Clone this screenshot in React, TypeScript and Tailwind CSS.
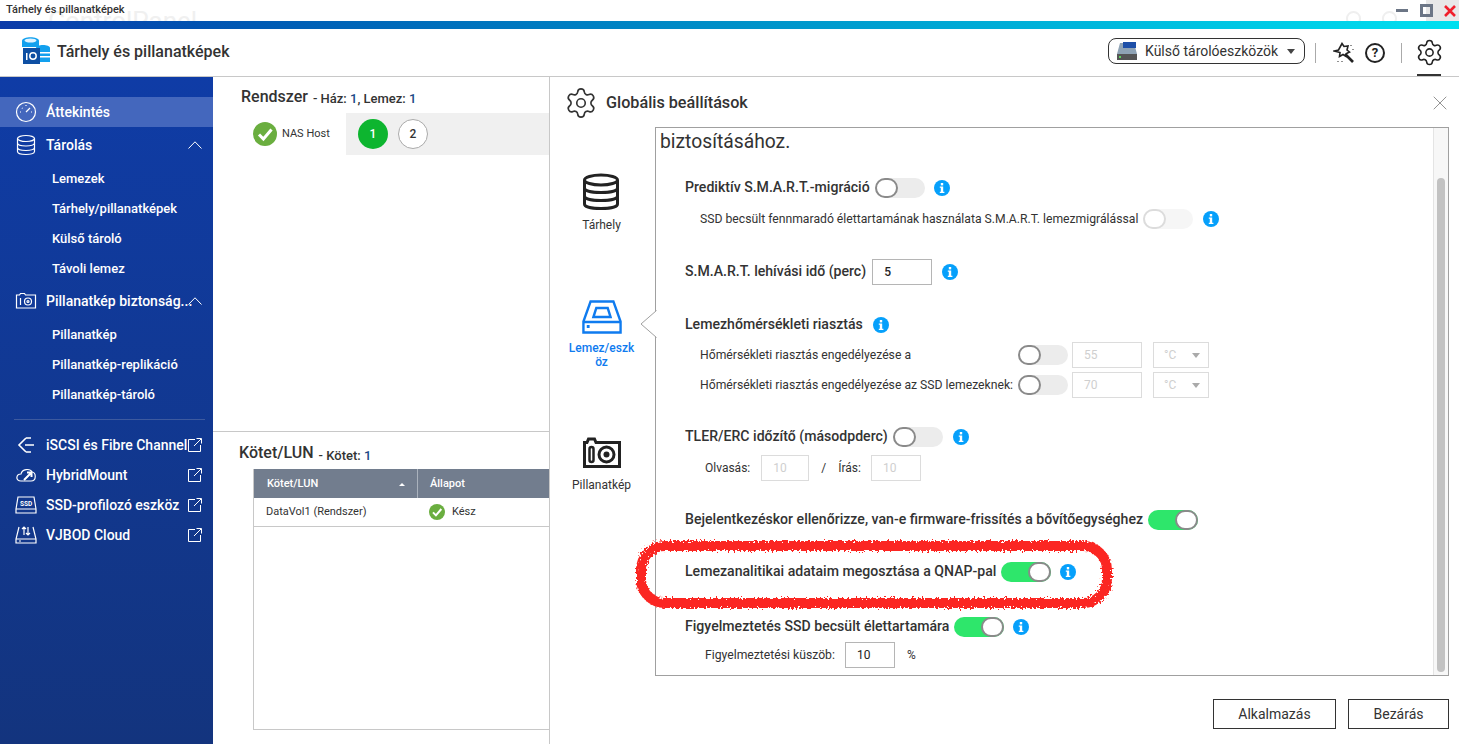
import { Settings, X } from 'lucide-react'
import type { ReactNode } from 'react'

function InfoDot() {
  return (
    <svg width="16" height="16" viewBox="0 0 16 16" className="shrink-0">
      <circle cx="8" cy="8" r="8" fill="#06a0fb" />
      <rect x="6.8" y="3" width="2.4" height="2.4" fill="#fff" />
      <path d="M5.8 6.6h3.4v5.2h1.2v1.2H5.8v-1.2h1V7.8h-1z" fill="#fff" />
    </svg>
  )
}

function Toggle({ on, faded }: { on?: boolean; faded?: boolean }) {
  return (
    <div className={`flex h-5 w-[50px] shrink-0 rounded-full ${on ? 'justify-end bg-[#2ee66b]' : faded ? 'bg-[#f6f6f6]' : 'bg-[#ececec]'}`}>
      <div className={`h-5 w-[23px] rounded-full border-[2px] bg-white ${faded ? 'border-[#dcdcdc]' : 'border-[#8a8a8a]'}`} />
    </div>
  )
}

function CheckDot({ size }: { size: number }) {
  return (
    <svg width={size} height={size} viewBox="0 0 24 24" className="shrink-0">
      <circle cx="12" cy="12" r="12" fill="#6aae3f" />
      <path d="M6 12.5l4.4 4.5L18.5 7.5" fill="none" stroke="#fff" strokeWidth="3" />
    </svg>
  )
}

function TextBox({ value, w, off }: { value: string; w: string; off?: boolean }) {
  return (
    <div className={`flex h-[26px] items-center border pl-[11px] text-xs ${w} ${off ? 'border-[#dcdcdc] text-[#cfcfcf]' : 'border-[#b5b5b5] text-[#222]'}`}>
      {value}
    </div>
  )
}

function UnitSelect() {
  return (
    <div className="flex h-[26px] w-[56px] items-center justify-between border border-[#dcdcdc] pr-2 pl-[10px] text-xs text-[#cfcfcf]">
      °C
      <span className="h-0 w-0 border-x-[4px] border-t-[5px] border-x-transparent border-t-[#aaa]" />
    </div>
  )
}

function OpenIcon() {
  return (
    <svg width="14" height="14" viewBox="0 0 14 14" fill="none" stroke="#fff" strokeWidth="1" className="shrink-0">
      <path d="M7 1.5H.5v12h12V7M6 8l7-7M8.5.5H13.5V5.5" />
    </svg>
  )
}

function NavIcon({ children }: { children: ReactNode }) {
  return (
    <svg width="22" height="22" viewBox="0 0 22 22" fill="none" stroke="#fff" strokeWidth="1.2" className="shrink-0">
      {children}
    </svg>
  )
}

function NavRow({ icon, label, right, active }: { icon: ReactNode; label: string; right?: ReactNode; active?: boolean }) {
  return (
    <div className={`flex h-[30px] items-center pr-[11px] pl-[15px] ${active ? 'bg-[#4467bd]' : ''}`}>
      {icon}
      <span className="ml-[9px] w-0 flex-1 text-sm font-medium whitespace-nowrap text-white">{label}</span>
      {right}
    </div>
  )
}

function SubRow({ label }: { label: string }) {
  return <div className="flex h-[30px] items-center pt-[2px] pl-[52px] text-[13px] font-medium text-white">{label}</div>
}

const chevron = (
  <svg width="14" height="8" viewBox="0 0 14 8" fill="none" stroke="#fff" strokeWidth="1" className="shrink-0">
    <path d="M.5 7.500L7 .8l6.500 6.700" />
  </svg>
)

export default function App() {
  return (
    <div className="relative flex h-[744px] w-[1459px] flex-col overflow-hidden bg-white font-['Roboto',sans-serif] text-[#333]">
      <div className="relative flex h-[21px] items-center justify-between overflow-hidden pl-[6px] text-[11px] font-medium text-[#333]">
        {/* ghost of the window behind */}
        <span className="absolute top-[6px] left-[48px] text-[26px] leading-[30px] font-normal whitespace-nowrap text-[#f0f0f0]">ControlPanel</span>
        <div className="absolute top-[11px] left-[1346px] size-[15px] rounded-full border-2 border-[#efefef]" />
        <div className="absolute top-[11px] left-[1382px] size-[15px] rounded-full border-2 border-[#efefef]" />
        <span className="relative">Tárhely és pillanatképek</span>
        <div className="relative flex h-full items-center">
          <div className="mr-[12px] h-[3px] w-3 bg-[#6c7686]" />
          <div className="relative z-10 -mr-[7px] size-[13px] border-[3px] border-[#6c7686]" />
          <div className="flex h-full w-[33px] items-center justify-end bg-[#e8e8e8] pr-[3px]">
            <svg width="12" height="12" viewBox="0 0 12 12" fill="none" stroke="#f0202c" strokeWidth="2.600">
              <path d="M1 1l10 10M11 1L1 11" />
            </svg>
          </div>
        </div>
      </div>
      <div className="h-2 bg-gradient-to-r from-[#0c3aa8] via-[#0090c8] to-[#00e0f0]" />
      <header className="flex h-[48px] items-center border-b border-[#c8c8c8] pl-[22px]">
        <svg width="28" height="28" viewBox="0 0 28 28" className="mb-[6px] shrink-0">
          <path d="M0 5c0-5 17-5 17 0v6H0z" fill="#12a0ee" />
          <ellipse cx="8.5" cy="4.500" rx="6" ry="2" fill="#dff3ff" />
          <path d="M14 12c0-4 14-4 14 0v14H14z" fill="#12a0ee" />
          <path d="M18 16h10v1.400H18zM18 20h10v1.400H18z" fill="#fff" />
          <rect x="1" y="12" width="17" height="16" fill="#0e4fa3" />
          <circle cx="11" cy="20" r="3.200" fill="none" stroke="#fff" strokeWidth="1.500" />
          <rect x="4" y="17" width="1.500" height="7" fill="#fff" />
        </svg>
        <span className="mb-[2px] ml-[7px] text-base font-medium text-[#333]">Tárhely és pillanatképek</span>
        <div className="ml-auto flex items-center">
          <div className="mb-[3px] flex h-[26px] w-[197px] items-center rounded-lg border border-[#333] pl-2 text-sm text-[#333]">
            <svg width="20" height="18" viewBox="0 0 20 18" className="shrink-0">
              <path d="M3 1h14l3 11H0z" fill="#8fa3b5" />
              <rect x="0" y="12" width="20" height="6" fill="#555" />
              <rect x="6" y="0" width="13" height="6" fill="#1d4fa8" />
              <rect x="2" y="14" width="2" height="2" fill="#5fd35f" />
            </svg>
            <span className="ml-2">Külső tárolóeszközök</span>
            <span className="ml-[9px] h-0 w-0 border-x-[4px] border-t-[5px] border-x-transparent border-t-[#444]" />
          </div>
          <div className="mr-[17px] ml-[10px] h-5 w-px bg-[#aaa]" />
          <svg width="22" height="22" viewBox="0 0 22 22" fill="none" stroke="#222" strokeWidth="1.600" className="shrink-0">
            <path d="M9 1.500l2 3 4-.5-1 4 2.500 2-3 1.500-.5 3-3-2-3.500 2 .5-4L1.500 9l4-1z" />
            <path d="M12 12l8 8" strokeWidth="2.600" />
            <path d="M18 3v1M20 7v1M5 19v1M9 19v1" strokeWidth="1" />
          </svg>
          <div className="ml-[10px] flex size-[20px] items-center justify-center rounded-full border-2 border-[#222] text-[13px] leading-none font-bold text-[#222]">?</div>
          <div className="mr-[15px] ml-[16px] h-5 w-px bg-[#aaa]" />
          <div className="relative mr-[18px] flex h-[47px] w-6 items-center justify-center">
            <Settings size={29} strokeWidth={1.300} color="#222" className="shrink-0" />
            <div className="absolute inset-x-0 bottom-0 h-[2px] bg-[#333]" />
          </div>
        </div>
      </header>
      <div className="flex min-h-0 flex-1">
        <aside className="flex w-[213px] shrink-0 flex-col bg-gradient-to-b from-[#0f3ca6] to-[#13347e] pt-5">
          <NavRow
            active
            label="Áttekintés"
            icon={<NavIcon><circle cx="11" cy="11" r="9.500" /><path d="M11 11l4-4M5 11h1M11 4v1M16 11h1M7 7l.5.5" /></NavIcon>}
          />
          <div className="mt-[3px]">
            <NavRow
              label="Tárolás"
              right={chevron}
              icon={<NavIcon><ellipse cx="11" cy="4.500" rx="8.500" ry="3" /><path d="M2.500 4.500v13c0 4 17 4 17 0v-13M2.500 9c0 4 17 4 17 0M2.500 13.500c0 4 17 4 17 0" /></NavIcon>}
            />
          </div>
          <div className="mt-[3px]">
            <SubRow label="Lemezek" />
            <SubRow label="Tárhely/pillanatképek" />
            <SubRow label="Külső tároló" />
            <SubRow label="Távoli lemez" />
          </div>
          <div className="mt-[3px]">
            <NavRow
              label="Pillanatkép biztonság..."
              right={chevron}
              icon={<NavIcon><path d="M1.500 5h3l1-1.500h4L10.500 5h10v13h-19z" /><path d="M5.500 8v7" /><circle cx="13" cy="11.500" r="3.500" /><circle cx="13" cy="11.500" r="1" /></NavIcon>}
            />
          </div>
          <div className="mt-[3px]">
            <SubRow label="Pillanatkép" />
            <SubRow label="Pillanatkép-replikáció" />
            <SubRow label="Pillanatkép-tároló" />
          </div>
          <div className="mt-[10px] mr-2 mb-[10px] ml-[14px] h-px bg-[#3d5a9f]" />
          <NavRow label="iSCSI és Fibre Channel" right={<OpenIcon />} icon={<NavIcon><path d="M11 4l-7 7 7 7M11 4h5M11 18h5M10 11h9" strokeWidth="1.600" /></NavIcon>} />
          <NavRow label="HybridMount" right={<OpenIcon />} icon={<NavIcon><path d="M6 17c-6 0-5-7 0-7 1-5 9-6 11-2 4 0 5 9-1 9z" /><path d="M9 16l7-7M12 8.500h4.500V13" strokeWidth="2" /></NavIcon>} />
          <NavRow label="SSD-profilozó eszköz" right={<OpenIcon />} icon={<NavIcon><path d="M3 3h16l2 12v4H1v-4zM1 15h20" /><text x="5" y="12" fontSize="6.500" fill="#fff" stroke="none" fontWeight="700">SSD</text></NavIcon>} />
          <NavRow label="VJBOD Cloud" right={<OpenIcon />} icon={<NavIcon><path d="M4 3L1 15v4h20v-4L18 3M1 15h20M9 11V3M7 5l2-2 2 2M13 3v8M11 9l2 2 2-2M4 17h2" /></NavIcon>} />
        </aside>
        <main className="min-w-0 flex-1">
          <div className="flex h-[36px] items-end pb-[4px] pl-7 font-medium">
            <span className="text-base">Rendszer</span>
            <span className="mb-[1px] ml-[5px] text-[13px]">- Ház: <span className="text-[#1a4a86]">1</span>, Lemez: <span className="text-[#1a4a86]">1</span></span>
          </div>
          <div className="flex h-[42px] items-stretch">
            <div className="flex w-[133px] items-center pl-10">
              <CheckDot size={24} />
              <span className="ml-[5px] text-[11px]">NAS Host</span>
            </div>
            <div className="flex flex-1 items-center gap-[10px] bg-[#f0f0f0] pl-3">
              <div className="flex size-[30px] items-center justify-center rounded-full bg-[#0db52f] text-xs font-medium text-white">1</div>
              <div className="flex size-[30px] items-center justify-center rounded-full border border-[#aaa] bg-white text-xs font-medium">2</div>
            </div>
          </div>
          <div className="mt-[276px] border-t border-[#c8c8c8]">
            <div className="flex h-[37px] items-end pb-[4px] pl-[26px]">
              <span className="text-base font-medium">Kötet/LUN</span>
              <span className="ml-[5px] text-[13px] font-medium">- Kötet: <span className="text-[#1a4a86]">1</span></span>
            </div>
            <div className="ml-10 h-[261px] border border-t-0 border-[#c8c8c8]">
              <div className="flex h-[29px] items-center bg-[#727d8e] text-[11px] font-medium text-white">
                <div className="flex h-full w-[164px] items-center justify-between border-r border-[#aab2bd] pt-[2px] pr-3 pl-[13px]">
                  Kötet/LUN
                  <span className="h-0 w-0 border-x-[3px] border-b-[3px] border-x-transparent border-b-white" />
                </div>
                <span className="pt-[2px] pl-3">Állapot</span>
              </div>
              <div className="flex h-[29px] items-center border-b border-[#c8c8c8] text-[11px]">
                <div className="w-[175px] pl-3">DataVol1 (Rendszer)</div>
                <CheckDot size={16} />
                <span className="ml-[7px]">Kész</span>
              </div>
            </div>
          </div>
        </main>
      </div>

      {/* Globális beállítások modal */}
      <div className="absolute top-[77px] right-0 bottom-0 left-[549px] flex flex-col border-l border-[#c8c8c8] bg-white">
        <div className="flex h-[50px] shrink-0 items-center pt-[2px] pr-[9px] pl-[14px]">
          <Settings size={34} strokeWidth={1.150} color="#333" className="shrink-0" />
          <span className="ml-2 text-[16.2px] font-medium">Globális beállítások</span>
          <X size={24} strokeWidth={0.800} color="#777" className="-mr-[2px] ml-auto" />
        </div>
        <div className="relative flex h-[549px] shrink-0">
          <div className="flex w-[105px] shrink-0 flex-col items-center pr-[2px] text-center text-xs">
            <div className="mt-[46px] flex flex-col items-center">
              <svg width="38" height="38" viewBox="0 0 38 38" fill="none" stroke="#222" strokeWidth="3">
                <ellipse cx="19" cy="7" rx="16.500" ry="5" />
                <path d="M2.500 7v24c0 6 33 6 33 0V7M2.500 15c0 6 33 6 33 0M2.500 23c0 6 33 6 33 0" />
              </svg>
              <span className="mt-[6px]">Tárhely</span>
            </div>
            <div className="mt-[67px] flex flex-col items-center font-medium text-[#0f7bef]">
              <svg width="40" height="34" viewBox="0 0 42 34" preserveAspectRatio="none" fill="none" stroke="#0f7bef" strokeWidth="2.500">
                <path d="M9 1.500h24l7.500 20v11h-39v-11zM1.500 22h39M12 17l3-9h12l3 9z" />
                <rect x="5" y="25" width="3" height="3" fill="#0f7bef" stroke="none" />
              </svg>
              <span className="mt-[7px] w-[68px] leading-[14px] break-all">Lemez/eszköz</span>
            </div>
            <div className="mt-[68px] flex flex-col items-center">
              <svg width="38" height="32" viewBox="0 0 38 32" fill="none" stroke="#222" strokeWidth="3">
                <path d="M1.500 5.500H4l1.500-3.500h6L13 5.500h23.500v24h-35z" />
                <rect x="6.500" y="10" width="4" height="15" rx="2" strokeWidth="2.500" />
                <circle cx="23.500" cy="17.500" r="7.500" />
                <circle cx="23.500" cy="17.500" r="3" fill="#222" stroke="none" />
              </svg>
              <span className="mt-[8px]">Pillanatkép</span>
            </div>
          </div>
          <svg width="18" height="28" viewBox="0 0 18 28" className="absolute top-[183px] left-[90px]">
            <path d="M16.500 0.500L1 14l15.500 13.500" fill="#fff" stroke="#a0a0a0" />
          </svg>
          <div className="mr-[10px] flex min-w-0 flex-1 overflow-hidden border border-[#a0a0a0] text-[14.1px] font-medium">
            <div className="min-w-0 flex-1">
              <div className="pt-[4px] pl-[4px] text-[19.300px] leading-[20px] font-normal">biztosításához.</div>
              <div className="flex flex-col pl-[29px]">
                <div className="mt-[26px] flex h-5 items-center gap-[5px]">Prediktív S.M.A.R.T.-migráció <Toggle /><span className="ml-[4px]"><InfoDot /></span></div>
                <div className="mt-[11px] flex h-5 items-center gap-[5px] pl-[15px] text-[12.2px] font-normal whitespace-nowrap">SSD becsült fennmaradó élettartamának használata S.M.A.R.T. lemezmigrálással <Toggle faded /><span className="ml-[5px]"><InfoDot /></span></div>
                <div className="mt-[30px] flex h-[26px] items-center gap-[6px]">S.M.A.R.T. lehívási idő (perc) <TextBox value="5" w="w-[60px]" /><span className="ml-[4px]"><InfoDot /></span></div>
                <div className="mt-[30px] flex h-5 items-center gap-[10px]">Lemezhőmérsékleti riasztás <InfoDot /></div>
                <div className="mt-[7px] flex h-[26px] items-center pl-[15px] text-[12.2px] font-normal">
                  <span className="w-[318px]">Hőmérsékleti riasztás engedélyezése a</span>
                  <Toggle />
                  <div className="ml-[4px]"><TextBox value="55" w="w-[70px]" off /></div>
                  <div className="ml-[11px]"><UnitSelect /></div>
                </div>
                <div className="mt-[4px] flex h-[26px] items-center pl-[15px] text-[12.2px] font-normal">
                  <span className="w-[318px] whitespace-nowrap">Hőmérsékleti riasztás engedélyezése az SSD lemezeknek:</span>
                  <Toggle />
                  <div className="ml-[4px]"><TextBox value="70" w="w-[70px]" off /></div>
                  <div className="ml-[11px]"><UnitSelect /></div>
                </div>
                <div className="mt-[29px] flex h-5 items-center gap-[5px]">TLER/ERC időzítő (másodpderc) <Toggle /><span className="ml-[5px]"><InfoDot /></span></div>
                <div className="mt-[8px] flex h-[26px] items-center pl-5 text-xs font-normal">
                  Olvasás:
                  <div className="ml-[11px]"><TextBox value="10" w="w-[48px]" off /></div>
                  <span className="ml-3">/</span>
                  <span className="ml-3">Írás:</span>
                  <div className="ml-[10px]"><TextBox value="10" w="w-[50px]" off /></div>
                </div>
                <div className="mt-[29px] flex h-5 items-center gap-[5px]">Bejelentkezéskor ellenőrizze, van-e firmware-frissítés a bővítőegységhez <Toggle on /></div>
                <div className="mt-[32px] flex h-5 items-center gap-[5px]">Lemezanalitikai adataim megosztása a QNAP-pal <Toggle on /><span className="ml-[4px]"><InfoDot /></span></div>
                <div className="mt-[35px] flex h-5 items-center gap-[5px]">Figyelmeztetés SSD becsült élettartamára <Toggle on /><span className="ml-[4px]"><InfoDot /></span></div>
                <div className="mt-[5px] flex h-[26px] items-center pl-5 text-[12.2px] font-normal">
                  Figyelmeztetési küszöb:
                  <div className="ml-[10px]"><TextBox value="10" w="w-[50px]" /></div>
                  <span className="ml-3 text-xs">%</span>
                </div>
              </div>
            </div>
            {/* scrollbar */}
            <div className="flex w-[15px] shrink-0 justify-center border-l border-[#e4e4e4] bg-[#f7f7f7] pt-[50px] pb-[3px]">
              <div className="w-2 rounded-full bg-[#c2c2c2]" />
            </div>
          </div>
        </div>
        <div className="flex flex-1 items-start justify-end gap-3 pt-[23px] pr-[10px] text-sm">
          <div className="flex h-[30px] w-[123px] items-center justify-center border border-[#333]">Alkalmazás</div>
          <div className="flex h-[30px] w-[101px] items-center justify-center border border-[#333]">Bezárás</div>
        </div>
      </div>

      {/* hand-drawn red annotation */}
      <svg width="490" height="80" viewBox="0 0 490 80" fill="none" className="absolute top-[534px] left-[630px]">
        <defs>
          <filter id="rough" x="-5%" y="-20%" width="110%" height="140%">
            <feTurbulence type="fractalNoise" baseFrequency="0.5" numOctaves="2" seed="4" />
            <feDisplacementMap in="SourceGraphic" scale="8" />
          </filter>
        </defs>
        <rect x="11" y="12" width="466" height="57" rx="24" stroke="#fb2622" strokeWidth="10" filter="url(#rough)" />
      </svg>
    </div>
  )
}
